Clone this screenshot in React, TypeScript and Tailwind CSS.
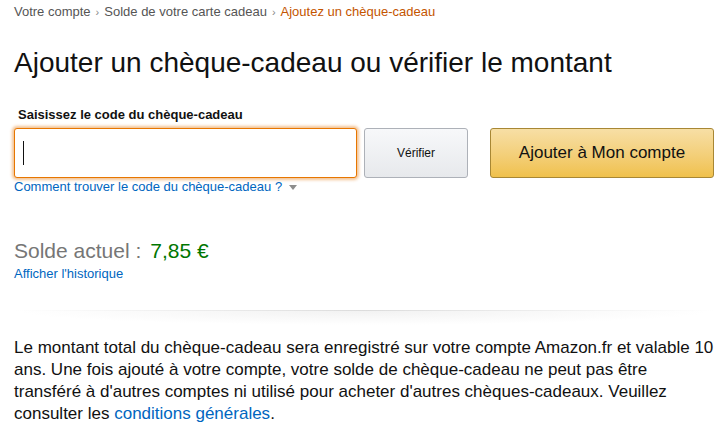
const font = { fontFamily: '"Liberation Sans", Arial, sans-serif' };

export default function App() {
  return (
    <div className="w-[728px] h-[448px] bg-white overflow-hidden px-[14px] text-[#111]" style={font}>
      {/* breadcrumb */}
      <div className="flex items-center gap-[5px] pt-[4px] text-[13px] leading-[16px] text-[#555]">
        <span>Votre compte</span>
        <span className="text-[11px] text-[#888]">›</span>
        <span>Solde de votre carte cadeau</span>
        <span className="text-[11px] text-[#888]">›</span>
        <span className="text-[#c45500]">Ajoutez un chèque-cadeau</span>
      </div>

      <h1 className="mt-[25px] text-[28px] leading-[36px] font-normal text-[#111]">
        Ajouter un chèque-cadeau ou vérifier le montant
      </h1>

      <label className="block mt-[24px] pl-[4px] text-[13px] leading-[19px] font-bold text-[#111]">
        Saisissez le code du chèque-cadeau
      </label>

      <div className="flex items-start mt-[4px]">
        <div className="w-[343px]">
          <div className="h-[50px] rounded-[3px] border border-[#e77600] shadow-[0_0_3px_2px_rgba(228,121,17,0.45)] bg-white flex items-center px-[8px]">
            <span className="block w-px h-[24px] bg-[#111]" />
          </div>
          <div className="flex items-center mt-[1px] text-[13px] leading-[16px] text-[#0066c0]">
            <span>Comment trouver le code du chèque-cadeau ?</span>
            <svg width="8" height="5" viewBox="0 0 8 5" className="ml-[7px]">
              <path d="M0 0 L8 0 L4 5 Z" fill="#8d8d8d" />
            </svg>
          </div>
        </div>
        <button className="ml-[7px] w-[104px] h-[50px] rounded-[3px] border border-[#adb1b8] bg-gradient-to-b from-[#f7f8fa] to-[#e7e9ec] text-[12px] text-[#111]">
          Vérifier
        </button>
        <button className="ml-[22px] w-[224px] h-[50px] rounded-[3px] border border-[#a88734] bg-gradient-to-b from-[#f7dfa5] to-[#f0c14b] text-[17px] text-[#111]">
          Ajouter à Mon compte
        </button>
      </div>

      <div className="mt-[44px] flex items-baseline text-[21px] leading-[24px]">
        <span className="text-[#767676]">Solde actuel :</span>
        <span className="ml-[9px] text-[#007600]">7,85 €</span>
      </div>
      <div className="mt-[3px] text-[13px] leading-[16px] text-[#0066c0]">Afficher l'historique</div>

      {/* divider with soft shadow */}
      <div className="mt-[28px] h-[27px]">
        <div className="h-px bg-gradient-to-r from-transparent via-[#dcdcdc] to-transparent" />
        <div className="h-[14px] bg-[radial-gradient(ellipse_at_top,#f2f2f2,rgba(255,255,255,0)_70%)]" />
      </div>

      <p className="w-[706px] text-[17px] leading-[22px] text-[#111]">
        Le montant total du chèque-cadeau sera enregistré sur votre compte Amazon.fr et valable 10
        <br />
        ans. Une fois ajouté à votre compte, votre solde de chèque-cadeau ne peut pas être
        <br />
        transféré à d'autres comptes ni utilisé pour acheter d'autres chèques-cadeaux. Veuillez
        <br />
        consulter les <span className="text-[#0066c0]">conditions générales</span>.
      </p>
    </div>
  );
}
